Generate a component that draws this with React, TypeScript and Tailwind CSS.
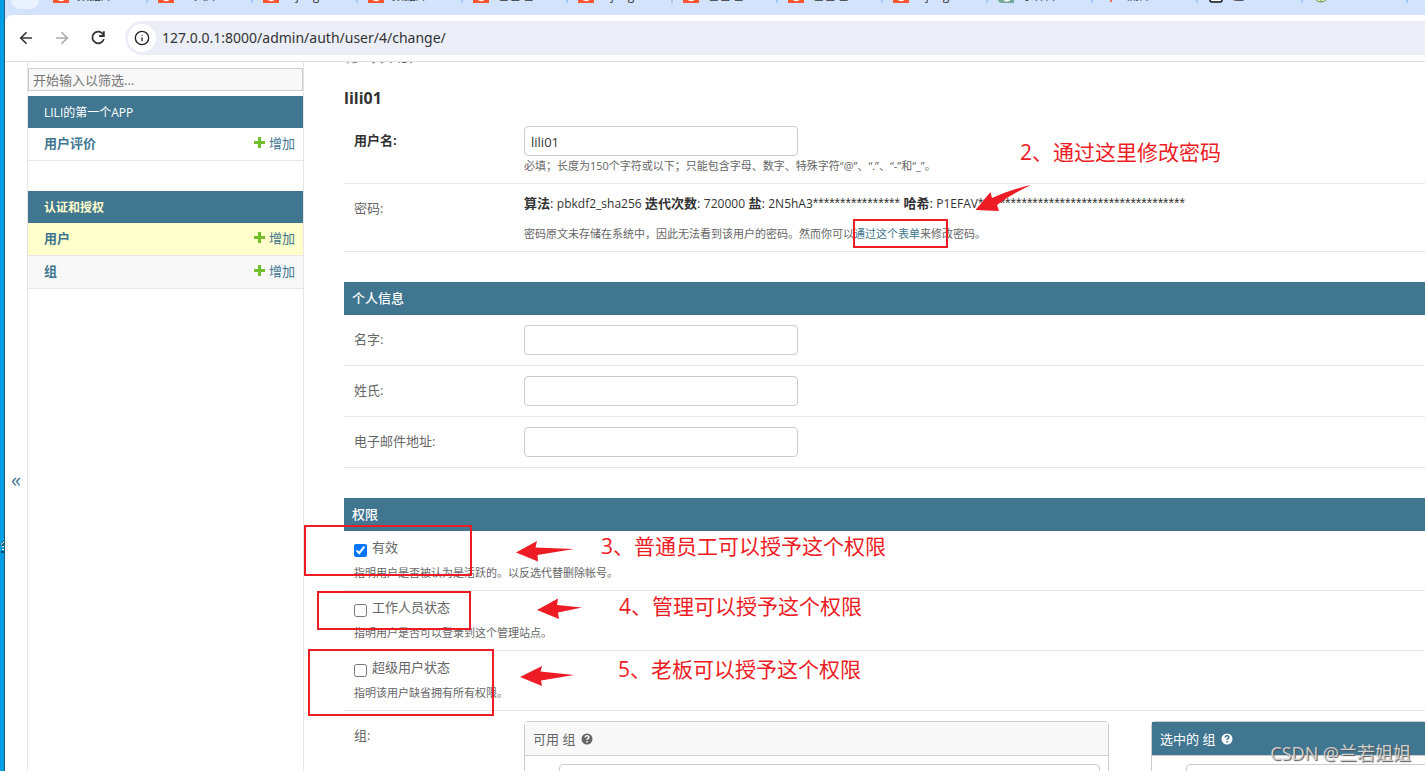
import React from 'react'
import { ArrowLeft, ArrowRight, Info } from 'lucide-react'

interface Tab {
  title: string
  icon: 'csdn' | 'teal' | 'red' | 'box' | 'green' | 'none'
}

const tabs: Tab[] = [
  { title: '数据库', icon: 'csdn' },
  { title: '工具库', icon: 'csdn' },
  { title: 'Django', icon: 'csdn' },
  { title: '数据库', icon: 'csdn' },
  { title: '包管理', icon: 'csdn' },
  { title: 'Django', icon: 'csdn' },
  { title: '包管理', icon: 'csdn' },
  { title: '包管理', icon: 'csdn' },
  { title: 'Django', icon: 'csdn' },
  { title: '字体库', icon: 'teal' },
  { title: '测师', icon: 'red' },
  { title: '值', icon: 'box' },
  { title: '', icon: 'green' },
  { title: '数', icon: 'none' }
]

const personalFields = [
  { id: 'first_name', label: '名字:' },
  { id: 'last_name', label: '姓氏:' },
  { id: 'email', label: '电子邮件地址:' }
]

const permissions = [
  { id: 'is_active', label: '有效', help: '指明用户是否被认为是活跃的。以反选代替删除帐号。', checked: true },
  { id: 'is_staff', label: '工作人员状态', help: '指明用户是否可以登录到这个管理站点。', checked: false },
  { id: 'is_superuser', label: '超级用户状态', help: '指明该用户缺省拥有所有权限。', checked: false }
]

const inputClass = 'block h-[30px] w-[274px] rounded border border-[#ccc] bg-white px-1.5 pt-0.5 text-[13px] text-[#333]'

function TabIcon({ icon }: { icon: Tab['icon'] }) {
  return (
    <svg width="16" height="16" viewBox="0 0 16 16" className="shrink-0">
      {icon === 'csdn' && (
        <>
          <rect width="16" height="16" fill="#fc5531" />
          <path d="M11 11.500c-1 2-6 2-6-1.500" fill="none" stroke="#fff" strokeWidth="2.500" />
        </>
      )}
      {icon === 'teal' && (
        <>
          <path d="M0 0h16v16H4a4 4 0 0 1-4-4z" fill="#74a99b" />
          <path d="M6 13c2 1.500 5 1 6-1" fill="none" stroke="#fff" strokeWidth="1.500" />
        </>
      )}
      {icon === 'red' && <path d="M8 9v6" stroke="#f04438" strokeWidth="1.500" />}
      {icon === 'box' && <rect x="2" y="3" width="12" height="12" rx="2" fill="#fff" stroke="#111" strokeWidth="1.500" />}
      {icon === 'green' && (
        <>
          <circle cx="8" cy="8" r="7" fill="#e6f5b0" stroke="#6d8f4e" />
          <path d="M8 8v7" stroke="#6d8f4e" />
        </>
      )}
    </svg>
  )
}

function TabStrip() {
  return (
    <div className="relative flex h-[15px] items-end overflow-hidden bg-[#d3e3fd] pl-12">
      <div className="absolute left-1.5 top-0 h-[9px] w-7 rounded-b-xl bg-[#ebf2ff]" />
      {tabs.map((tab, idx) => (
        <div key={idx} className="mb-3 flex w-[105px] shrink-0 items-center">
          <TabIcon icon={tab.icon} />
          <span className="ml-2 h-4 w-[69px] overflow-hidden text-[12px] leading-[18px] text-[#333]">{tab.title}</span>
          <span className="h-4 w-0.5 bg-[#a8c7fa]" />
        </div>
      ))}
    </div>
  )
}

function AddressBar() {
  return (
    <div className="bg-[#d3e3fd]">
      <div className="flex h-[47px] items-center overflow-hidden rounded-tl-lg border-b border-[#dfe0e3] bg-white pl-3">
        <button aria-label="后退" className="mr-[18px] text-[#333]">
          <ArrowLeft size={18} strokeWidth={2.25} />
        </button>
        <button aria-label="前进" className="mr-[18px] text-[#aaa]">
          <ArrowRight size={18} strokeWidth={2.25} />
        </button>
        <button aria-label="重新加载" className="mr-[18px] text-[#333]">
          <svg width="18" height="18" viewBox="0 0 16 16" fill="none" stroke="currentColor" strokeWidth="1.600">
            <path d="M12.600 4.800A5.200 5.200 0 1 0 13.200 9" />
            <path d="M13.200 2v4.200H9" />
          </svg>
        </button>
        <div className="flex h-[34px] min-w-0 flex-1 items-center rounded-l-full bg-[#ebeef7] pl-[3px]">
          <span className="flex size-7 items-center justify-center rounded-full bg-white text-[#222]">
            <Info size={16} />
          </span>
          <input
            aria-label="地址"
            defaultValue="127.0.0.1:8000/admin/auth/user/4/change/"
            className="ml-1.5 min-w-0 flex-1 bg-transparent font-['Noto_Sans',sans-serif] text-[14px] text-[#333]"
          />
        </div>
      </div>
    </div>
  )
}

function ModelRow({ name, rowClass = '' }: { name: string; rowClass?: string }) {
  return (
    <tr className={rowClass}>
      <th scope="row" className="h-[33px] border-b border-[#e6e6e6] pb-0.5 pl-4 text-left font-bold">
        <a href="#">{name}</a>
      </th>
      <td className="h-[33px] border-b border-[#e6e6e6] pb-0.5 pr-2">
        <a href="#" className="flex items-center justify-end gap-1">
          <svg width="11" height="11" viewBox="0 0 11 11" className="mb-0.5" fill="#70bf2b">
            <path d="M4 0h3v4h4v3H7v4H4V7H0V4h4z" />
          </svg>
          增加
        </a>
      </td>
    </tr>
  )
}

function Sidebar() {
  return (
    <nav className="w-[277px] shrink-0 border-x border-[#e6e6e6] pt-1.5 text-[13px] leading-4 text-[#417690]">
      <input
        aria-label="筛选"
        placeholder="开始输入以筛选..."
        className="mb-[5px] block h-[23px] w-full border border-[#ccc] bg-[#f8f8f8] px-1 placeholder:text-[#757575]"
      />
      <table className="mb-[30px] w-full border-separate border-spacing-0">
        <caption className="h-8 bg-[#417690] pl-4 pt-px text-left text-[12px] leading-8 text-white">
          <a href="#">LILI的第一个APP</a>
        </caption>
        <tbody>
          <ModelRow name="用户评价" />
        </tbody>
      </table>
      <table className="w-full border-separate border-spacing-0">
        <caption className="h-8 bg-[#417690] pl-4 pt-px text-left text-[12px] font-bold leading-8 text-[#ffc]">
          <a href="#">认证和授权</a>
        </caption>
        <tbody>
          <ModelRow name="用户" rowClass="bg-[#ffc]" />
          <ModelRow name="组" rowClass="bg-[#f8f8f8]" />
        </tbody>
      </table>
    </nav>
  )
}

function SectionTitle({ children }: { children: React.ReactNode }) {
  return <h2 className="h-[33px] bg-[#417690] px-2 text-[13px] font-medium leading-[33px] text-white">{children}</h2>
}

function HelpIcon({ label }: { label: string }) {
  return (
    <svg role="img" aria-label={label} width="12" height="12" viewBox="0 0 12 12">
      <circle cx="6" cy="6" r="5.500" fill="currentColor" />
      <path d="M4.200 4.500c0-2.400 3.700-2.300 3.700-.2C7.900 5.600 6 5.500 6 7" fill="none" stroke="var(--mark)" strokeWidth="1.500" />
      <path d="M5.200 8h1.600v1.600H5.200z" fill="var(--mark)" />
    </svg>
  )
}

function Masked({ length }: { length: number }) {
  return <span className="font-['Liberation_Sans',sans-serif] text-[14px]">{'*'.repeat(length)}</span>
}

function UserForm() {
  return (
    <form className="min-w-[1200px]">
      <fieldset className="mb-[30px]">
        <div className="flex border-b border-[#e6e6e6] px-2.5 pb-[9px]">
          <label htmlFor="username" className="w-[170px] pt-[5px] font-bold text-[#333]">用户名:</label>
          <div>
            <input id="username" defaultValue="lili01" className={inputClass} />
            <p className="mt-px text-[11px] leading-[17px]">
              必填；长度为150个字符或以下；只能包含字母、数字、特殊字符“@”、“.”、“-”和“_”。
            </p>
          </div>
        </div>
        <div className="flex border-b border-[#e6e6e6] px-2.5 pb-[9px] pt-2.5">
          <span className="w-[170px] pt-[5px]">密码:</span>
          <div className="whitespace-nowrap">
            <p className="h-[18px] text-[#333]">
              <strong>算法</strong>: <span className="text-[12px]">pbkdf2_sha256</span> <strong>迭代次数</strong>:{' '}
              <span className="text-[12px]">720000</span> <strong>盐</strong>: <span className="text-[12px]">2N5hA3</span>
              <Masked length={16} /> <strong>哈希</strong>: <span className="text-[12px]">P1EFAV</span>
              <Masked length={38} />
            </p>
            <p className="mt-[13px] text-[11px] leading-[17px]">
              密码原文未存储在系统中，因此无法看到该用户的密码。然而你可以
              <a href="#" className="text-[#417690]">通过这个表单</a>来修改密码。
            </p>
          </div>
        </div>
      </fieldset>

      <fieldset className="mb-[30px]">
        <SectionTitle>个人信息</SectionTitle>
        {personalFields.map((field) => (
          <div key={field.id} className="flex border-b border-[#e6e6e6] p-2.5">
            <label htmlFor={field.id} className="w-[170px] pt-[5px]">{field.label}</label>
            <input id={field.id} className={inputClass} />
          </div>
        ))}
      </fieldset>

      <fieldset>
        <SectionTitle>权限</SectionTitle>
        {permissions.map((item) => (
          <div key={item.id} className="border-b border-[#e6e6e6] px-2.5 pb-[9px] pt-[7px]">
            <div className="flex h-[18px] gap-[5px]">
              <input id={item.id} type="checkbox" defaultChecked={item.checked} className="mt-1.5 size-[13px]" />
              <label htmlFor={item.id}>{item.label}</label>
            </div>
            <p className="mt-2 text-[11px] leading-[17px]">{item.help}</p>
          </div>
        ))}
        <div className="flex px-2.5 pt-2.5">
          <label htmlFor="groups" className="w-[170px] pt-[5px]">组:</label>
          <div className="w-[585px] rounded-t border border-[#ccc]">
            <h3 className="flex h-[34px] items-center gap-1.5 border-b border-[#ccc] bg-[#f8f8f8] px-2 [--mark:#f8f8f8]">
              可用 组 <HelpIcon label="可用 组" />
            </h3>
            <div className="py-2 pl-[34px] pr-2">
              <input id="groups" className="block h-[30px] w-full rounded border border-[#ccc]" />
            </div>
          </div>
          <div className="ml-[42px] w-[585px] shrink-0 rounded-t border border-[#ccc]">
            <h3 className="flex h-[34px] items-center gap-1.5 border-b border-[#ccc] bg-[#417690] px-2 text-white [--mark:#417690]">
              选中的 组 <HelpIcon label="选中的 组" />
            </h3>
            <div className="py-2 pl-[34px] pr-2">
              <input aria-label="选中的 组" className="block h-[30px] w-full rounded border border-[#ccc]" />
            </div>
          </div>
        </div>
      </fieldset>
    </form>
  )
}

// Red marks drawn over the page
function Annotations() {
  return (
    <div className="pointer-events-none absolute inset-0 text-[21px] leading-[30px] text-[#ed1c24]">
      <div className="absolute left-[853px] top-[219px] h-[29px] w-[95px] border-2 border-[#ed1c24]" />
      <div className="absolute left-[304px] top-[525px] h-[51px] w-[168px] border-2 border-[#ed1c24]" />
      <div className="absolute left-[317px] top-[591px] h-[39px] w-[154px] border-2 border-[#ed1c24]" />
      <div className="absolute left-[308px] top-[649px] h-[67px] w-[186px] border-2 border-[#ed1c24]" />
      <svg width="1100" height="771" className="absolute left-0 top-0" fill="#ed1c24">
        <path d="M975.500 210 990.500 192 992 198 Q1012 189 1031 185 Q1010 195 997 205 L999 211z" />
        <path d="M516 552.500 537 541 535.500 547.500 574 549 537.500 555 538 561.500z" />
        <path d="M537 610 558 598.500 557 605 582 607.500 558 612.500 559 619z" />
        <path d="M520 677 542 666 540.500 671.500 574 675 541 680.500 542 686z" />
      </svg>
      <p className="absolute left-[1020px] top-[137px] whitespace-nowrap">2、通过这里修改密码</p>
      <p className="absolute left-[601px] top-[531px] whitespace-nowrap">3、普通员工可以授予这个权限</p>
      <p className="absolute left-[619px] top-[591px] whitespace-nowrap">4、管理可以授予这个权限</p>
      <p className="absolute left-[618px] top-[654px] whitespace-nowrap">5、老板可以授予这个权限</p>
      <p className="absolute bottom-1 right-3.5 whitespace-nowrap text-[18px] leading-7 text-[#d0d0d0] [text-shadow:1px_1px_1px_#555]">
        CSDN @兰若姐姐
      </p>
    </div>
  )
}

export default function App() {
  return (
    <div className="relative flex h-screen overflow-hidden bg-white font-['Open_Sans','Noto_Sans_CJK_SC',sans-serif] text-[13px] leading-[18px] text-[#666]">
      <div className="w-[5px] shrink-0 border-r border-[#245a78] bg-[#009fe3] pt-[541px]">
        <svg width="4" height="12" viewBox="0 0 4 12" fill="none">
          <path d="M1 4 4 1M2 5h2M1 11h3" stroke="#0b4a6b" strokeWidth="2" />
          <path d="M1 3.500 4 1M2 5.500h2M2 8.500h2" stroke="#fff" />
        </svg>
      </div>
      <div className="flex min-w-0 flex-1 flex-col">
        <TabStrip />
        <AddressBar />
        <div className="flex min-h-0 flex-1 overflow-hidden">
          <button aria-label="切换导航" className="w-[22px] shrink-0 pt-[126px] text-[20px] text-[#417690]">«</button>
          <Sidebar />
          <main className="min-w-0 flex-1 overflow-hidden pl-10">
            <h1 className="-mt-[17px] h-5 text-[20px] font-light leading-5">修改 用户</h1>
            <h2 className="mb-[18px] mt-[23px] text-[16px] font-bold leading-5 text-[#333]">lili01</h2>
            <UserForm />
          </main>
        </div>
      </div>
      <Annotations />
    </div>
  )
}
